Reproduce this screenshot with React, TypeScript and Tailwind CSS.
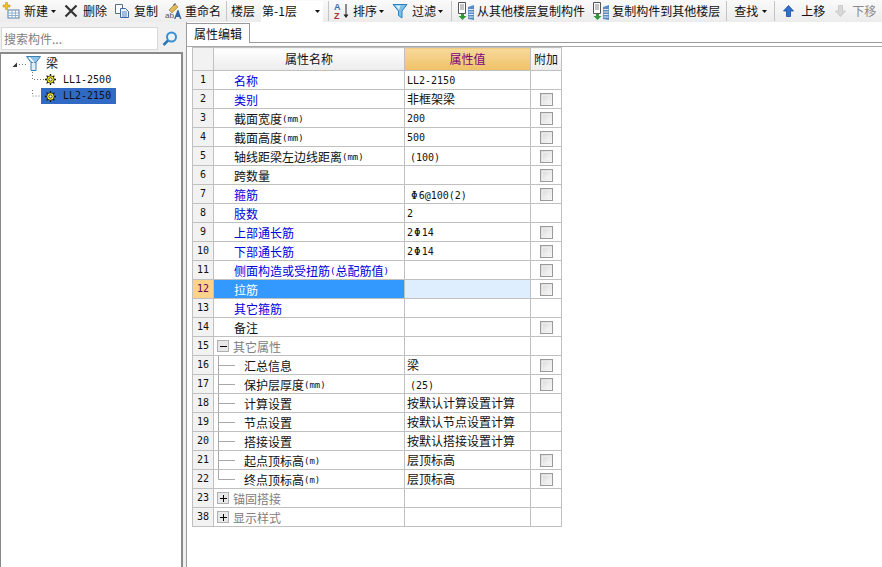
import type { ReactNode } from 'react';

const cjk = "font-['Noto_Sans_CJK_SC','Liberation_Sans',sans-serif]";
const mono = "font-['DejaVu_Sans_Mono','Noto_Sans_CJK_SC',monospace]";

type Row = {
  no: number;
  name: ReactNode;
  value?: ReactNode;
  blue?: boolean;
  check?: boolean;
  child?: boolean;
  last?: boolean;
  group?: 'open' | 'closed';
};

const Num = ({ children }: { children: ReactNode }) => (
  <span className={`${mono} text-[10px] inline-block translate-y-px`}>{children}</span>
);
const Unit = ({ children }: { children: ReactNode }) => (
  <span className={`${mono} text-[9px]`}>{children}</span>
);
const Bar = () => <span className={`${mono} text-[11px] px-px inline-block translate-y-px`}>Φ</span>;

const rows: Row[] = [
  { no: 1, name: '名称', value: <Num>LL2-2150</Num>, blue: true },
  { no: 2, name: '类别', value: '非框架梁', blue: true, check: true },
  { no: 3, name: <>截面宽度<Unit>(mm)</Unit></>, value: <Num>200</Num>, check: true },
  { no: 4, name: <>截面高度<Unit>(mm)</Unit></>, value: <Num>500</Num>, check: true },
  { no: 5, name: <>轴线距梁左边线距离<Unit>(mm)</Unit></>, value: <span className="pl-[3px]"><Num>(100)</Num></span>, check: true },
  { no: 6, name: '跨数量', check: true },
  { no: 7, name: '箍筋', value: <span className="pl-[3px]"><Bar /><Num>6@100(2)</Num></span>, blue: true, check: true },
  { no: 8, name: '肢数', value: <Num>2</Num>, blue: true },
  { no: 9, name: '上部通长筋', value: <><Num>2</Num><Bar /><Num>14</Num></>, blue: true, check: true },
  { no: 10, name: '下部通长筋', value: <><Num>2</Num><Bar /><Num>14</Num></>, blue: true, check: true },
  { no: 11, name: <>侧面构造或受扭筋<Unit>(</Unit>总配筋值<Unit>)</Unit></>, blue: true, check: true },
  { no: 12, name: '拉筋', blue: true, check: true },
  { no: 13, name: '其它箍筋', blue: true },
  { no: 14, name: '备注', check: true },
  { no: 15, name: '其它属性', group: 'open' },
  { no: 16, name: '汇总信息', value: '梁', check: true, child: true },
  { no: 17, name: <>保护层厚度<Unit>(mm)</Unit></>, value: <span className="pl-[3px]"><Num>(25)</Num></span>, check: true, child: true },
  { no: 18, name: '计算设置', value: '按默认计算设置计算', child: true },
  { no: 19, name: '节点设置', value: '按默认节点设置计算', child: true },
  { no: 20, name: '搭接设置', value: '按默认搭接设置计算', child: true },
  { no: 21, name: <>起点顶标高<Unit>(m)</Unit></>, value: '层顶标高', check: true, child: true },
  { no: 22, name: <>终点顶标高<Unit>(m)</Unit></>, value: '层顶标高', check: true, child: true, last: true },
  { no: 23, name: '锚固搭接', group: 'closed' },
  { no: 38, name: '显示样式', group: 'closed' },
];

const Caret = () => (
  <svg width="5" height="3" viewBox="0 0 5 3" className="shrink-0">
    <path d="M0 0h5L2.5 3z" fill="#111" />
  </svg>
);

const Sep = () => <div className="h-[20px] w-px bg-[#c4c4c4] shrink-0" />;

const NewIcon = () => (
  <svg width="18" height="18" viewBox="0 0 18 18">
    <rect x="6" y="8" width="11" height="8" fill="#fff" stroke="#5a7fa8" />
    <path d="M6 11h11M6 13.500h11M10 8v8M13.500 8v8" stroke="#8fb0d0" />
    <path d="M1 3h2.500V0.500h2V3H8v2H5.500v2.500h-2V5H1z" fill="#f4c430" stroke="#b8860b" strokeWidth="0.5" />
  </svg>
);
const DeleteIcon = () => (
  <svg width="14" height="14" viewBox="0 0 14 14">
    <path d="M1.500 1.500l11 11M12.500 1.500l-11 11" stroke="#333" strokeWidth="2.200" />
  </svg>
);
const CopyIcon = () => (
  <svg width="16" height="16" viewBox="0 0 16 16">
    <path d="M1.500 1.500h7v9h-7z" fill="#fff" stroke="#5a6f8f" />
    <path d="M6.500 5.500h5l3 3v6h-8z" fill="#e8f0fa" stroke="#3f6aa5" />
    <path d="M8 9h5M8 11h5M8 13h5" stroke="#5a88c0" />
  </svg>
);
const RenameIcon = () => (
  <svg width="17" height="18" viewBox="0 0 17 18">
    <path d="M4 8l6-6 3 3-6 6z" fill="#e2b85a" stroke="#8f7436" strokeWidth="0.6" />
    <path d="M8 3l2-2 1 1-2 2z" fill="#6a6a6a" />
    <text x="0" y="16" fontSize="8" fill="#555" fontFamily="Liberation Sans">ab</text>
    <path d="M9 17l3.500-9h1L16.500 17h-1.500l-.7-2H11.200l-.7 2z" fill="#3465a4" />
  </svg>
);
const SortIcon = () => (
  <svg width="17" height="18" viewBox="0 0 17 18">
    <text x="1" y="8" fontSize="9" fontWeight="bold" fill="#3f6ab0" fontFamily="Liberation Sans">A</text>
    <text x="1" y="17" fontSize="9" fontWeight="bold" fill="#b03030" fontFamily="Liberation Sans">Z</text>
    <path d="M13 2v13" stroke="#222" />
    <path d="M10.500 12.500h5L13 16z" fill="#222" />
  </svg>
);
const FilterIcon = ({ size = 16 }: { size?: number }) => (
  <svg width={size} height={size} viewBox="0 0 16 16">
    <path d="M1 1.500h14L10 8v7L6.500 12.500V8z" fill="#7cc0ea" stroke="#2f80b8" />
    <path d="M3.500 2.500h5L7 7z" fill="#d8f0fb" />
  </svg>
);
const FloorCopyIcon = () => (
  <svg width="18" height="19" viewBox="0 0 18 19">
    <path d="M1.500 0.500h7v11h-7z" fill="#fff" stroke="#555" />
    <path d="M3 3h4M3 5h4M3 7h4" stroke="#888" />
    <path d="M4 12h3v2h2.500L5.500 18 1.500 14H4z" fill="#2f9a3c" />
    <path d="M11 5l6-2v15l-6-1z" fill="#5a8cc4" />
    <path d="M11.500 7.500h5M11.500 10h5M11.500 12.500h5M11.500 15h5" stroke="#dfeaf6" />
  </svg>
);
const ArrowIcon = ({ up, color, edge }: { up: boolean; color: string; edge: string }) => (
  <svg width="11" height="12" viewBox="0 0 11 12">
    <path
      d={up ? 'M5.500 0.500L10.500 6H7.500V11.500H3.500V6H0.500z' : 'M5.500 11.500L10.500 6H7.500V0.500H3.500V6H0.500z'}
      fill={color}
      stroke={edge}
      strokeWidth="0.8"
    />
  </svg>
);
const BeamIcon = () => (
  <svg width="15" height="16" viewBox="0 0 15 16">
    <path d="M0.500 1.500h14L10 7.500H5z" fill="#8fc3ea" stroke="#3a7fb0" />
    <path d="M5 7.500h5V15.500H5z" fill="#dff0fb" stroke="#3a7fb0" />
    <path d="M3 2.500l5 5" stroke="#fff" strokeWidth="1.500" />
  </svg>
);
const GearIcon = () => (
  <svg width="11" height="11" viewBox="0 0 11 11">
    <path d="M5.500 0v11M0 5.500h11M1.600 1.600l7.800 7.800M9.400 1.600l-7.800 7.800" stroke="#111" strokeWidth="1.300" />
    <circle cx="5.500" cy="5.500" r="3.700" fill="#f7ee20" stroke="#111" strokeWidth="0.700" />
    <circle cx="5.500" cy="5.500" r="1.600" fill="#fff" stroke="#111" strokeWidth="0.700" />
  </svg>
);

function CheckBox() {
  return (
    <div className="mx-auto w-[13px] h-[13px] border border-[#9a9a9a] bg-gradient-to-br from-[#d8d8d8] to-[#fbfbfb] p-px">
      <div className="w-full h-full border border-[#ececec] bg-gradient-to-br from-[#dcdcdc] to-[#f8f8f8]" />
    </div>
  );
}

function Expander({ open }: { open: boolean }) {
  return (
    <div className="w-[12px] h-[12px] border border-[#b0b0b0] bg-[#e8e8e8] flex items-center justify-center relative shrink-0">
      <div className="w-[7px] h-px bg-black" />
      {!open && <div className="absolute w-px h-[7px] bg-black" />}
    </div>
  );
}

function ChildLine({ last }: { last?: boolean }) {
  return (
    <svg width="30" height="18" viewBox="0 0 30 18" className="shrink-0">
      <path d={last ? 'M4.500 -1V9.500H21' : 'M4.500 -1V19M4.500 9.500H21'} stroke="#a8a8a8" fill="none" />
    </svg>
  );
}

function PropRow({ row }: { row: Row }) {
  const selected = row.no === 12;
  const nameColor = selected
    ? 'text-white bg-[#3399ff]'
    : row.group
      ? 'text-[#808080]'
      : row.blue
        ? 'text-[#0000e0]'
        : 'text-[#111]';
  return (
    <tr className="h-[19px]">
      <td
        className={`border border-[#c0c0c0] p-0 text-center ${mono} text-[10px] ${
          selected ? 'bg-[#fdd28a] text-[#600060]' : 'bg-[#f2f2f2] text-[#111]'
        }`}
      >
        <div className="h-[18px] flex items-center justify-center">{row.no}</div>
      </td>
      <td className={`border border-[#c0c0c0] p-0 ${nameColor}`}>
        <div className="flex items-center h-[18px] whitespace-nowrap overflow-hidden">
          {row.group ? (
            <>
              <div className="pl-[3px] pr-[4px]">
                <Expander open={row.group === 'open'} />
              </div>
              <span className="translate-y-px">{row.name}</span>
            </>
          ) : row.child ? (
            <>
              <ChildLine last={row.last} />
              <span className="flex items-center translate-y-px">{row.name}</span>
            </>
          ) : (
            <span className="pl-[20px] flex items-center translate-y-px">{row.name}</span>
          )}
        </div>
      </td>
      <td className={`border border-[#c0c0c0] p-0 pl-[2px] text-[#111] ${selected ? 'bg-[#deeeff]' : ''}`}>
        <div className="h-[18px] flex items-center whitespace-nowrap overflow-hidden">{row.value}</div>
      </td>
      <td className="border border-[#c0c0c0] p-0">
        <div className="h-[18px] flex items-center">{row.check && <CheckBox />}</div>
      </td>
    </tr>
  );
}

export default function App() {
  return (
    <div className={`w-[882px] h-[567px] overflow-hidden flex flex-col bg-white text-[12px] leading-[18px] text-[#111] ${cjk}`}>
      {/* Toolbar */}
      <div className="h-[22px] shrink-0 flex items-center bg-gradient-to-b from-[#fafafa] to-[#ececec] whitespace-nowrap">
        <div className="ml-[2px] w-[19px]"><NewIcon /></div>
        <span className="ml-[3px]">新建</span>
        <div className="ml-[3px]"><Caret /></div>
        <div className="ml-[8px]"><DeleteIcon /></div>
        <span className="ml-[5px]">删除</span>
        <div className="ml-[7px]"><CopyIcon /></div>
        <span className="ml-[4px]">复制</span>
        <div className="ml-[7px]"><RenameIcon /></div>
        <span className="ml-[3px]">重命名</span>
        <div className="ml-[5px]"><Sep /></div>
        <span className="ml-[4px]">楼层</span>
        <div className="ml-[6px] w-[62px] h-[21px] bg-white flex items-center justify-between pr-[3px]">
          <span className="pl-px">第-1层</span>
          <Caret />
        </div>
        <div className="ml-[5px]"><Sep /></div>
        <div className="ml-[4px]"><SortIcon /></div>
        <span className="ml-[3px]">排序</span>
        <div className="ml-[2px]"><Caret /></div>
        <div className="ml-[8px]"><FilterIcon /></div>
        <span className="ml-[4px]">过滤</span>
        <div className="ml-[2px]"><Caret /></div>
        <div className="ml-[8px]"><Sep /></div>
        <div className="ml-[5px]"><FloorCopyIcon /></div>
        <span className="ml-[2px]">从其他楼层复制构件</span>
        <div className="ml-[7px]"><FloorCopyIcon /></div>
        <span className="ml-[2px]">复制构件到其他楼层</span>
        <div className="ml-[6px]"><Sep /></div>
        <span className="ml-[7px]">查找</span>
        <div className="ml-[4px]"><Caret /></div>
        <div className="ml-[7px]"><Sep /></div>
        <div className="ml-[8px]"><ArrowIcon up color="#2f6fd0" edge="#1c4a96" /></div>
        <span className="ml-[7px]">上移</span>
        <div className="ml-[10px]"><ArrowIcon up={false} color="#d8d8d8" edge="#c4c4c4" /></div>
        <span className="ml-[6px] text-[#8a8a8a]">下移</span>
      </div>

      <div className="flex-1 flex min-h-0">
        {/* Left: search and tree */}
        <div className="w-[187px] shrink-0 flex flex-col bg-[#f0f0f0] border-r border-[#9a9a9a]">
          <div className="h-[30px] shrink-0 flex items-end pb-[2px] pl-[1px]">
            <div className="w-[157px] h-[23px] bg-white border border-[#d8d8d8] flex items-center pl-[2px] text-[#808080]">
              搜索构件...
            </div>
            <svg width="16" height="16" viewBox="0 0 16 16" className="ml-[4px] mb-[3px]">
              <circle cx="9.500" cy="6" r="4.500" fill="#e8f4fc" stroke="#3a8fd0" strokeWidth="2" />
              <path d="M6 9.500L1.500 14" stroke="#2a78b8" strokeWidth="2.500" />
            </svg>
          </div>
          <div className="flex-1 w-[183px] bg-white border-t-2 border-l border-r-2 border-[#8a8a8a] border-b-0 pl-[10px] pt-px">
            <div className="flex items-center h-[16px]">
              <svg width="15" height="16" viewBox="0 0 15 16" className="shrink-0">
                <path d="M1.500 12L6 7.500V12z" fill="#333" />
                <path d="M8 9.500h7" stroke="#777" strokeDasharray="1 2" />
              </svg>
              <BeamIcon />
              <span className="ml-[5px]">梁</span>
            </div>
            <div className="flex items-center h-[15px] ml-[20px] mt-px">
              <svg width="14" height="15" viewBox="0 0 14 15" className="shrink-0">
                <path d="M1.500 0V7.500H14" stroke="#777" strokeDasharray="1 2" fill="none" />
              </svg>
              <GearIcon />
              <span className={`ml-[7px] ${mono} text-[10px]`}>LL1-2500</span>
            </div>
            <div className="flex items-center h-[16px] ml-[20px] mt-px">
              <svg width="10" height="16" viewBox="0 0 10 16" className="shrink-0">
                <path d="M1.500 -1V8H10" stroke="#777" strokeDasharray="1 2" fill="none" />
              </svg>
              <div className="h-[16px] w-[75px] bg-[#316ac5] flex items-center pl-[4px]">
                <GearIcon />
                <span className={`ml-[7px] ${mono} text-[10px]`}>LL2-2150</span>
              </div>
            </div>
          </div>
        </div>

        {/* Right: property editor */}
        <div className="flex-1 flex flex-col min-w-0">
          <div className="h-[21px] shrink-0 border-b border-[#9a9a9a] flex items-end">
            <div className="w-[63px] h-[20px] -mb-px bg-white border-t border-r border-[#9a9a9a] flex items-center pl-[7px] relative">
              属性编辑
            </div>
          </div>
          <div className="h-[3px] shrink-0" />
          <div className="flex-1 border-t border-[#a8a8a8] pl-[5px]">
            <table className="table-fixed border-collapse w-[370px]">
              <colgroup>
                <col className="w-[21px]" />
                <col className="w-[191px]" />
                <col className="w-[126px]" />
                <col className="w-[31px]" />
              </colgroup>
              <thead>
                <tr className="h-[23px] font-normal">
                  <th className="border border-[#c0c0c0] font-normal bg-[#f2f2f2]" />
                  <th className="border border-[#c0c0c0] font-normal bg-gradient-to-b from-white to-[#ececec]">属性名称</th>
                  <th className="border border-[#c0c0c0] font-normal bg-gradient-to-b from-[#f7d99c] to-[#f0c165] text-[#800080]">属性值</th>
                  <th className="border border-[#c0c0c0] font-normal bg-gradient-to-b from-white to-[#ececec]">附加</th>
                </tr>
              </thead>
              <tbody>
                {rows.map((row) => (
                  <PropRow key={row.no} row={row} />
                ))}
              </tbody>
            </table>
          </div>
        </div>
      </div>
    </div>
  );
}
